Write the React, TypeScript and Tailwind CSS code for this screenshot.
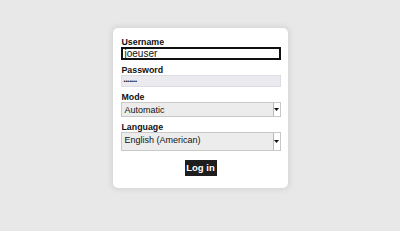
import React from "react";

function SelectBox({ text, h }: { text: string; h: string }) {
  return (
    <div className={`flex ${h} w-[160px] items-stretch border border-[#c8c8c8] bg-[#ececec]`}>
      <div className="flex-1 pl-[3px] pt-[1.5px] text-[9px] leading-[11px] text-[#111]">{text}</div>
      <div className="flex w-[7px] items-center justify-center border-l border-[#b8b8b8] bg-white">
        <svg width="5" height="3" viewBox="0 0 5 3">
          <path d="M0 0h5L2.5 3z" fill="#111" />
        </svg>
      </div>
    </div>
  );
}

export default function App() {
  return (
    <div
      className="flex h-[231px] w-[400px] justify-center bg-[#e8e8e8] pt-[28px]"
      style={{ fontFamily: '"Liberation Sans", Arial, sans-serif' }}
    >
      <div className="flex h-[160px] w-[175px] flex-col rounded-[5px] bg-white pl-[8px] pt-[10px] shadow-[0_0_5px_2px_rgba(0,0,0,0.08)]">
        <div className="h-[9px] pl-[1px] text-[8.8px] font-bold leading-[9px] text-[#111]">Username</div>
        <div className="flex h-[13px] w-[160px] items-center border-2 border-[#111] bg-white pl-[2px] text-[10px] leading-[10px] text-[#111]">
          joeuser
        </div>

        <div className="mt-[6px] h-[9px] pl-[1px] text-[8.8px] font-bold leading-[9px] text-[#111]">Password</div>
        <div className="flex h-[12px] w-[160px] items-center border border-[#dcdce4] bg-[#eaeaef] pl-[2px]">
          <span className="text-[6px] leading-[6px] tracking-[-0.2px] text-[#222]">•••••••</span>
        </div>

        <div className="mt-[6px] h-[9px] pl-[1px] text-[8.8px] font-bold leading-[9px] text-[#111]">Mode</div>
        <SelectBox text="Automatic" h="h-[15px]" />

        <div className="mt-[6px] h-[9px] pl-[1px] text-[8.8px] font-bold leading-[9px] text-[#111]">Language</div>
        <SelectBox text="English (American)" h="h-[19px]" />

        <div className="mt-[9px] flex w-[160px] justify-center">
          <div className="flex h-[16px] w-[32px] items-center justify-center bg-[#1e1e1e] text-[9.5px] font-bold text-white">
            Log in
          </div>
        </div>
      </div>
    </div>
  );
}
